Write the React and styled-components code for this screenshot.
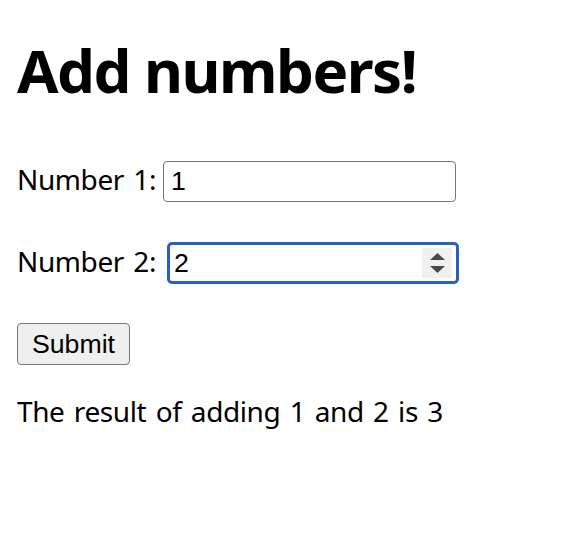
import React from 'react';
import styled, { createGlobalStyle } from 'styled-components';

const GlobalStyle = createGlobalStyle`
  body {
    margin: 16px 16px 16px 17px;
    background: #ffffff;
    color: #000000;
    font-family: "Noto Sans", "Open Sans", sans-serif;
  }
`;

const Page = styled.div`
  display: flex;
  flex-direction: column;
`;

const Title = styled.h1`
  font-size: 60px;
  font-weight: 700;
  letter-spacing: -1.5px;
  line-height: 73px;
  margin: 18px 0 53px 0;
`;

const Row = styled.div`
  display: flex;
  align-items: center;
  margin-top: ${props => props.gap || 0}px;
`;

const Label = styled.label`
  font-size: 28px;
  letter-spacing: -0.4px;
  word-spacing: 2.5px;
  margin: 0 ${props => props.space || 8}px 4px 0;
`;

const InputBox = styled.div`
  box-sizing: border-box;
  width: ${props => (props.focused ? 292 : 293)}px;
  height: ${props => (props.focused ? 42 : 41)}px;
  border: ${props => (props.focused ? '3px solid #2a5fc4' : '1.5px solid #767676')};
  border-radius: ${props => (props.focused ? 5 : 4)}px;
  display: flex;
  align-items: center;
  padding: 0 4px 0 ${props => (props.focused ? 4 : 7)}px;
  font-family: "Liberation Sans", Arial, sans-serif;
  font-size: 26.7px;
`;

const Value = styled.span`
  flex: 1;
`;

const Spinner = styled.div`
  width: 30px;
  height: 30px;
  background: #f0f0f0;
  display: flex;
  flex-direction: column;
  align-items: center;
  justify-content: center;
  gap: 6px;
`;

const Button = styled.button`
  box-sizing: border-box;
  width: 113px;
  height: 42px;
  background: #efefef;
  border: 1.5px solid #767676;
  border-radius: 4px;
  font-family: "Liberation Sans", Arial, sans-serif;
  font-size: 26.7px;
  color: #000;
  padding: 0;
`;

const Result = styled.p`
  font-size: 28px;
  letter-spacing: -0.4px;
  word-spacing: 2.5px;
  line-height: 38px;
  margin: 27px 0 0 0;
`;

const Arrow = ({ up }) => (
  <svg width="15" height="7" viewBox="0 0 15 7">
    <path d={up ? 'M0 7 L7.5 0 L15 7 Z' : 'M0 0 L7.5 7 L15 0 Z'} fill="#4a4a4a" />
  </svg>
);

export default function App() {
  return (
    <Page>
      <GlobalStyle />
      <Title>Add numbers!</Title>
      <Row>
        <Label space={7}>Number 1:</Label>
        <InputBox>
          <Value>1</Value>
        </InputBox>
      </Row>
      <Row gap={40}>
        <Label space={11}>Number 2:</Label>
        <InputBox focused>
          <Value>2</Value>
          <Spinner>
            <Arrow up />
            <Arrow />
          </Spinner>
        </InputBox>
      </Row>
      <Row gap={39}>
        <Button>Submit</Button>
      </Row>
      <Result>The result of adding 1 and 2 is 3</Result>
    </Page>
  );
}
